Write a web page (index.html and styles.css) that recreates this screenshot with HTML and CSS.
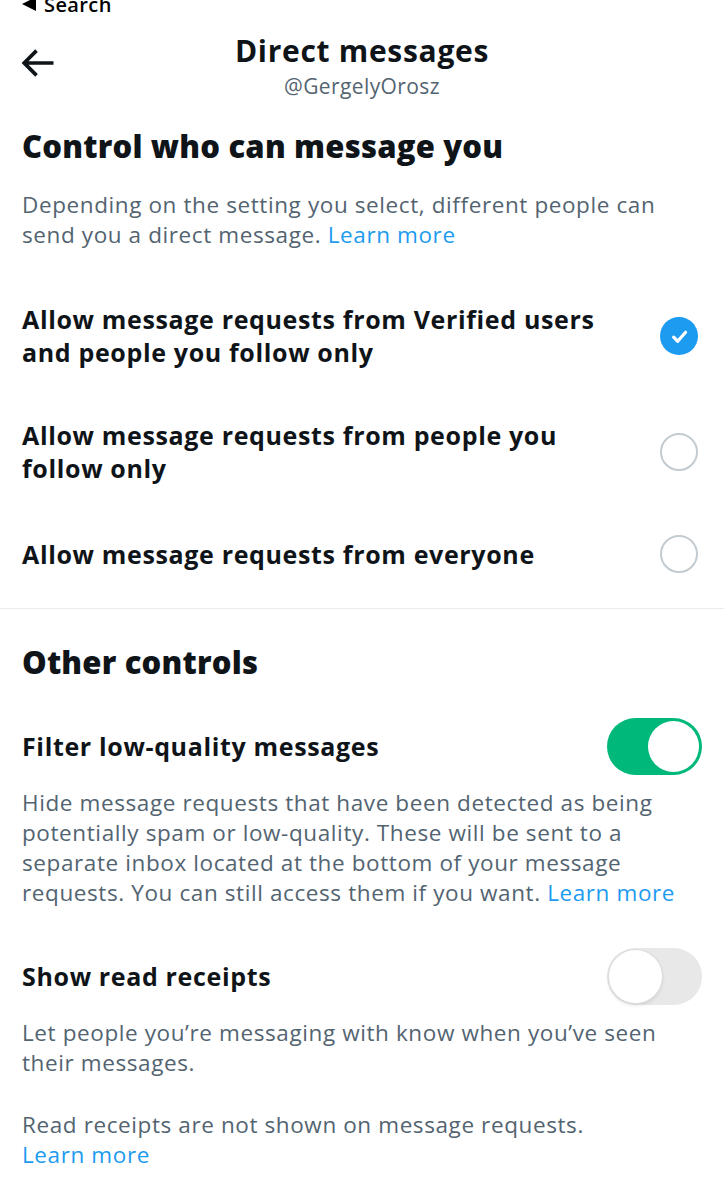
FILE: index.html
```html
<!DOCTYPE html>
<html lang="en">
<head>
<meta charset="utf-8">
<title>Direct messages</title>
<link rel="stylesheet" href="styles.css">
</head>
<body>
<div class="status"><span class="tri"></span><span>Search</span></div>
<header class="topbar">
  <button class="back" aria-label="Back">
    <svg viewBox="0 0 24 24" width="44" height="44"><path d="M7.414 13l5.043 5.04-1.414 1.42L3.586 12l7.457-7.46 1.414 1.42L7.414 11H21v2H7.414z" fill="#0f1419"/></svg>
  </button>
  <div class="titles">
    <h1 class="title">Direct messages</h1>
    <div class="handle">@GergelyOrosz</div>
  </div>
  <div class="spacer"></div>
</header>

<main class="page">
  <section class="sec">
    <h2 class="heading">Control who can message you</h2>
    <p class="desc">Depending on the setting you select, different people can send you a direct message. <a class="link" href="#">Learn more</a></p>
    <ul class="options">
      <li class="opt">
        <span class="opt-label">Allow message requests from Verified users and people you follow only</span>
        <span class="radio checked"><svg viewBox="0 0 24 24" width="27" height="27"><path d="M6.8 12.6l3.6 3.6 7-8" fill="none" stroke="#fff" stroke-width="2.9" stroke-linecap="round" stroke-linejoin="round"/></svg></span>
      </li>
      <li class="opt">
        <span class="opt-label">Allow message requests from people you follow only</span>
        <span class="radio"></span>
      </li>
      <li class="opt">
        <span class="opt-label">Allow message requests from everyone</span>
        <span class="radio"></span>
      </li>
    </ul>
  </section>

  <hr class="divider">

  <section class="sec">
    <h2 class="heading heading2">Other controls</h2>
    <div class="row row-filter">
      <span class="opt-label">Filter low-quality messages</span>
      <span class="toggle on"><span class="knob"></span></span>
    </div>
    <p class="desc desc-tight">Hide message requests that have been detected as being potentially spam or low-quality. These will be sent to a separate inbox located at the bottom of your message requests. You can still access them if you want. <a class="link" href="#">Learn more</a></p>

    <div class="row row-receipts">
      <span class="opt-label">Show read receipts</span>
      <span class="toggle"><span class="knob"></span></span>
    </div>
    <p class="desc desc-tight">Let people you’re messaging with know when you’ve seen their messages.</p>
    <p class="desc desc-note">Read receipts are not shown on message requests.<br><a class="link" href="#">Learn more</a></p>
  </section>
</main>
</body>
</html>
```

FILE: styles.css
```css
* { box-sizing: border-box; }
html, body { margin: 0; padding: 0; background: #fff; }
body {
  font-family: "Open Sans", "Liberation Sans", sans-serif;
  color: #0f1419;
  overflow: hidden;
}

.status {
  display: flex;
  align-items: center;
  gap: 8px;
  margin-top: -7px;
  height: 24px;
  padding-left: 22px;
  font-size: 20px;
  line-height: 24px;
  font-weight: 600;
  letter-spacing: 0.4px;
  color: #000;
}
.tri {
  width: 0; height: 0;
  border-top: 7px solid transparent;
  border-bottom: 7px solid transparent;
  border-right: 14px solid #000;
  margin-top: -2px;
}

.topbar {
  display: grid;
  grid-template-columns: 1fr auto 1fr;
  align-items: start;
  padding: 16px 22px 0;
}
.back {
  justify-self: start;
  border: 0;
  background: none;
  padding: 0;
  margin: 8px 0 0 -7px;
  width: 44px; height: 44px;
  display: flex;
}
.titles { text-align: center; }
.title {
  margin: 0;
  font-size: 30px;
  line-height: 36px;
  font-weight: 700;
  letter-spacing: 0.7px;
}
.handle {
  margin-top: 4px;
  font-size: 21px;
  line-height: 26px;
  letter-spacing: 0.4px;
  color: #536471;
}

.page { padding: 0; }
.sec { padding: 0 22px; }

.heading {
  margin: 27px 0 0;
  font-size: 31px;
  line-height: 40px;
  font-weight: 800;
  letter-spacing: 0.2px;
}
.heading2 { margin-top: 33px; }

.desc {
  margin: 24px 0 0;
  font-size: 22.5px;
  line-height: 30px;
  letter-spacing: 0.6px;
  color: #536471;
}
.link { color: #1d9bf0; text-decoration: none; }

.options {
  list-style: none;
  margin: 28px 0 0;
  padding: 0;
}
.opt {
  display: flex;
  align-items: center;
  justify-content: space-between;
  gap: 30px;
  padding: 25px 4px 25px 0;
}
.opt-label {
  font-size: 25px;
  line-height: 33px;
  font-weight: 700;
  letter-spacing: 0.65px;
  max-width: 604px;
}
.radio {
  flex: none;
  width: 38px; height: 38px;
  border-radius: 50%;
  border: 2px solid #c2cbd0;
  display: flex;
  align-items: center;
  justify-content: center;
}
.radio.checked {
  border: 0;
  background: #1d9bf0;
}

.divider {
  border: 0;
  height: 1px;
  background: #e9ecee;
  margin: 10px 0 0;
}

.row {
  display: flex;
  align-items: center;
  justify-content: space-between;
}
.row-filter { margin-top: 36px; }
.row-receipts { margin-top: 40px; }
.desc-tight { margin-top: 13px; }
.desc-note { margin-top: 32px; }

.toggle {
  flex: none;
  width: 95px; height: 57px;
  border-radius: 29px;
  background: #e8e8e8;
  padding: 2px;
  display: flex;
  align-items: center;
  justify-content: flex-start;
}
.toggle .knob {
  width: 53px; height: 53px;
  border-radius: 50%;
  background: #fff;
  box-shadow: 0 0 0 1px #dcdcdc, 0 2px 4px rgba(0,0,0,0.12);
}
.toggle.on {
  background: #00b87a;
  justify-content: flex-end;
  padding: 3px;
}
.toggle.on .knob {
  width: 51px; height: 51px;
  box-shadow: none;
}
```
